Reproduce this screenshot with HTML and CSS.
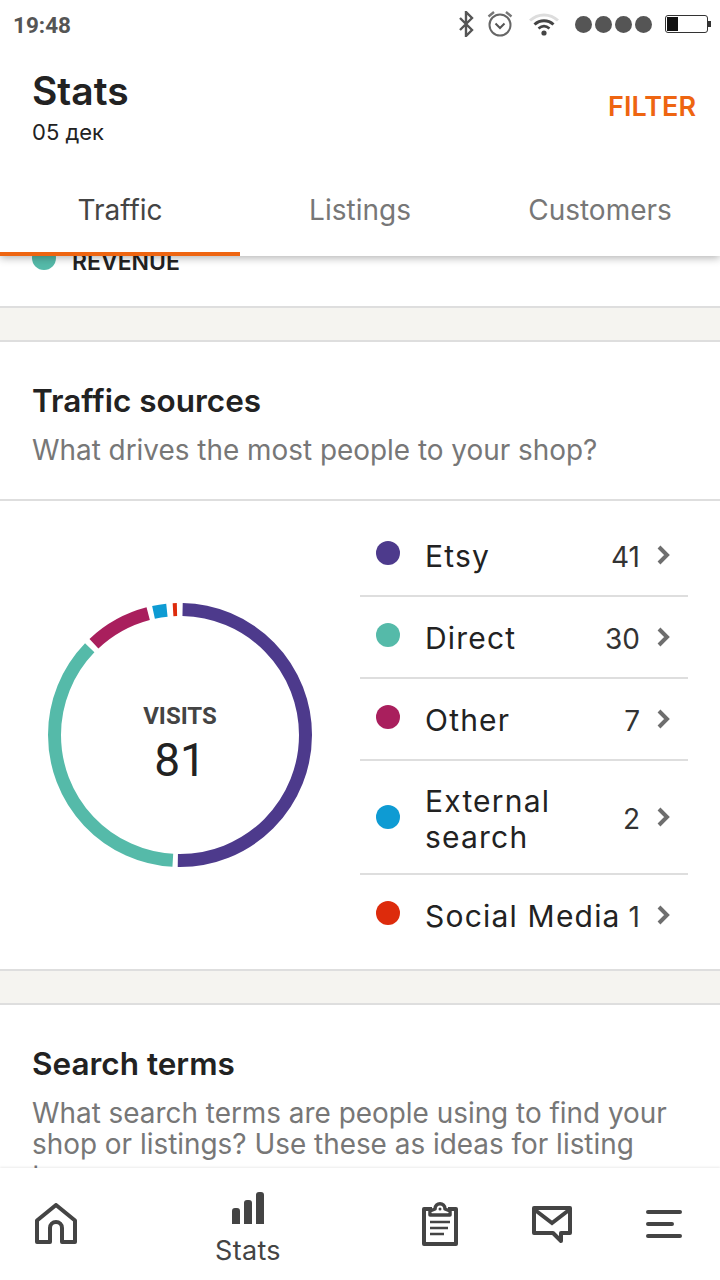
FILE: index.html
```html
<!DOCTYPE html>
<html lang="en">
<head>
<meta charset="utf-8">
<title>Stats</title>
<link rel="stylesheet" href="styles.css">
</head>
<body>
<div class="phone">
  <header class="top">
    <div class="status">
      <span class="clock">19:48</span>
      <div class="status-icons">
        <svg class="ic-bt" width="16" height="26" viewBox="0 0 16 26"><path d="M2 7l12 12-6 6V1l6 6L2 19" fill="none" stroke="#555" stroke-width="2.4"/></svg>
        <svg class="ic-alarm" width="26" height="28" viewBox="0 0 26 28"><circle cx="13" cy="15" r="10.5" fill="none" stroke="#666" stroke-width="2"/><path d="M8.5 13.5l4.5 4.5 4.5-4.5" fill="none" stroke="#555" stroke-width="2"/><path d="M1.5 6.5L7 2M24.500 6.500L19 2" stroke="#777" stroke-width="2.400" fill="none"/></svg>
        <svg class="ic-wifi" width="30" height="24" viewBox="0 0 30 24"><path d="M1 8.500C9 1 21 1 29 8.500" fill="none" stroke="#ddd" stroke-width="3"/><path d="M5.500 12.500C11 7.500 19 7.500 24.500 12.500" fill="none" stroke="#444" stroke-width="3"/><path d="M9.500 16.500C13 13.500 17 13.500 20.500 16.500" fill="none" stroke="#444" stroke-width="2.600"/><circle cx="15" cy="21" r="2.600" fill="#444"/></svg>
        <div class="signal"><i></i><i></i><i></i><i></i></div>
        <div class="battery"><span class="battery-fill"></span></div>
      </div>
    </div>
    <div class="title-row">
      <div>
        <h1>Stats</h1>
        <p class="date">05 дек</p>
      </div>
      <span class="filter">FILTER</span>
    </div>
    <nav class="tabs">
      <span class="tab active">Traffic</span>
      <span class="tab">Listings</span>
      <span class="tab">Customers</span>
    </nav>
  </header>

  <main class="scroll">
    <section class="revenue">
      <i class="dot teal"></i><span>REVENUE</span>
    </section>
    <div class="band"></div>
    <section class="head">
      <h2>Traffic sources</h2>
      <p>What drives the most people to your shop?</p>
    </section>
    <section class="sources">
      <div class="donut">
        <svg width="264" height="264" viewBox="0 0 264 264">
          <g fill="none" stroke-width="13" transform="rotate(-90 132 132)">
            <circle cx="132" cy="132" r="125.500" pathLength="360" stroke="#4d3a8c" stroke-dasharray="179.800 180.200" stroke-dashoffset="-1.200"/>
            <circle cx="132" cy="132" r="125.500" pathLength="360" stroke="#55baa9" stroke-dasharray="130.700 229.300" stroke-dashoffset="-183.300"/>
            <circle cx="132" cy="132" r="125.500" pathLength="360" stroke="#a91f5d" stroke-dasharray="28.600 331.400" stroke-dashoffset="-316.700"/>
            <circle cx="132" cy="132" r="125.500" pathLength="360" stroke="#0e9bd3" stroke-dasharray="6.200 353.800" stroke-dashoffset="-347.800"/>
            <circle cx="132" cy="132" r="125.500" pathLength="360" stroke="#dd2b0c" stroke-dasharray="1.800 358.200" stroke-dashoffset="-356.800"/>
          </g>
        </svg>
        <div class="donut-label">
          <span class="visits">VISITS</span>
          <span class="total">81</span>
        </div>
      </div>
      <ul class="legend">
        <li class="row"><i class="dot purple"></i><span class="name">Etsy</span><span class="count">41</span><svg class="chev" width="14" height="22" viewBox="0 0 14 22"><path d="M3 3l8 8-8 8" fill="none" stroke="#6e6e6e" stroke-width="4"/></svg></li>
        <li class="row"><i class="dot teal"></i><span class="name">Direct</span><span class="count">30</span><svg class="chev" width="14" height="22" viewBox="0 0 14 22"><path d="M3 3l8 8-8 8" fill="none" stroke="#6e6e6e" stroke-width="4"/></svg></li>
        <li class="row"><i class="dot berry"></i><span class="name">Other</span><span class="count">7</span><svg class="chev" width="14" height="22" viewBox="0 0 14 22"><path d="M3 3l8 8-8 8" fill="none" stroke="#6e6e6e" stroke-width="4"/></svg></li>
        <li class="row tall"><i class="dot blue"></i><span class="name">External search</span><span class="count">2</span><svg class="chev" width="14" height="22" viewBox="0 0 14 22"><path d="M3 3l8 8-8 8" fill="none" stroke="#6e6e6e" stroke-width="4"/></svg></li>
        <li class="row"><i class="dot red"></i><span class="name">Social Media</span><span class="count">1</span><svg class="chev" width="14" height="22" viewBox="0 0 14 22"><path d="M3 3l8 8-8 8" fill="none" stroke="#6e6e6e" stroke-width="4"/></svg></li>
      </ul>
    </section>
    <div class="band"></div>
    <section class="head terms">
      <h2>Search terms</h2>
      <p>What search terms are people using to find your shop or listings? Use these as ideas for listing tags.</p>
    </section>
  </main>

  <nav class="bottom">
    <span class="nav-item">
      <svg width="42" height="42" viewBox="0 0 42 42"><path d="M2 39V17.500L21 2l19 15.500V39H27V25a6 6 0 0 0-12 0v14z" fill="none" stroke="#444" stroke-width="4" stroke-linejoin="round"/></svg>
    </span>
    <span class="nav-item stats-item">
      <svg width="34" height="32" viewBox="0 0 34 32"><path d="M1 32V19a3 3 0 0 1 3-3h2a3 3 0 0 1 3 3v13zM13 32V11a3 3 0 0 1 3-3h2a3 3 0 0 1 3 3v21zM25 32V3a3 3 0 0 1 3-3h2a3 3 0 0 1 3 3v29z" fill="#444"/></svg>
      <span class="nav-label">Stats</span>
    </span>
    <span class="nav-item">
      <svg width="36" height="44" viewBox="0 0 36 44"><path d="M10 7H2v35h32V7h-8" fill="none" stroke="#444" stroke-width="4" stroke-linejoin="round"/><path d="M8 13V9l5-2c0-7 10-7 10 0l5 2v4z" fill="#fff" stroke="#444" stroke-width="3.500" stroke-linejoin="round"/><circle cx="18" cy="7" r="1.500" fill="#444"/><path d="M8 20h20M8 26h18M8 32h14" stroke="#444" stroke-width="2.400"/></svg>
    </span>
    <span class="nav-item">
      <svg width="40" height="37" viewBox="0 0 40 37"><path d="M2 2h36v25H29v8l-8-8H2z" fill="none" stroke="#444" stroke-width="4" stroke-linejoin="round"/><path d="M3 4l17 13L37 4" fill="none" stroke="#444" stroke-width="4"/></svg>
    </span>
    <span class="nav-item">
      <svg width="36" height="28" viewBox="0 0 36 28"><path d="M2 2h32M2 14h24M2 26h32" stroke="#444" stroke-width="4" stroke-linecap="round"/></svg>
    </span>
  </nav>
</div>
</body>
</html>
```
FILE: styles.css
```css
* { box-sizing: border-box; }
html, body { margin: 0; padding: 0; background: #fff; }
body { font-family: Inter, "Liberation Sans", sans-serif; color: #222; }
h1, h2, p, ul { margin: 0; padding: 0; }
ul { list-style: none; }
i { display: block; font-style: normal; }

.phone {
  width: 720px;
  height: 1280px;
  display: flex;
  flex-direction: column;
  overflow: hidden;
  background: #fff;
}

.top {
  height: 256px;
  flex: none;
  position: relative;
  z-index: 2;
  background: #fff;
  box-shadow: 0 2px 8px rgba(0, 0, 0, .3);
}
.status {
  height: 48px;
  display: flex;
  align-items: center;
  justify-content: space-between;
  padding: 0 12px 0 13px;
}
.clock { font: 700 22.500px Roboto, sans-serif; color: #555; padding-top: 2px; }
.status-icons { display: flex; align-items: center; }
.ic-alarm { margin-left: 13px; }
.ic-wifi { margin-left: 16px; }
.signal { display: flex; gap: 3px; margin-left: 16px; }
.signal i { width: 17px; height: 17px; border-radius: 50%; background: #555; }
.battery {
  width: 43px;
  height: 18px;
  margin-left: 13px;
  position: relative;
  border: 1px solid #333;
  border-radius: 3px;
  padding: 1px;
}
.battery::after {
  content: "";
  position: absolute;
  right: -4px;
  top: 5px;
  width: 3px;
  height: 6px;
  background: #333;
}
.battery-fill { display: block; width: 11px; height: 100%; background: #111; }

.title-row {
  height: 106px;
  padding: 20px 24px 0 32px;
  display: flex;
  justify-content: space-between;
}
h1 { font-size: 39px; font-weight: 600; line-height: 46px; color: #222; }
.date { font-size: 22px; line-height: 30px; margin-top: 3px; color: #222; }
.filter { font-size: 27px; font-weight: 600; color: #ee6511; line-height: 36px; margin-top: 21px; }

.tabs { display: flex; height: 102px; }
.tab {
  flex: 1;
  text-align: center;
  font-size: 28px;
  line-height: 36px;
  padding-top: 38px;
  color: #777;
}
.tab.active { color: #444; border-bottom: 4px solid #ee6511; }

.scroll { flex: 1; min-height: 0; overflow: hidden; }

.revenue {
  height: 52px;
  margin-top: -2px;
  display: flex;
  align-items: flex-start;
  padding-left: 32px;
  font-size: 23px;
  font-weight: 600;
  color: #222;
}
.revenue .dot { margin: -8px 0 0; }
.revenue span { margin: -6px 0 0 16px; line-height: 28px; }
.dot { width: 24px; height: 24px; border-radius: 50%; flex: none; margin-bottom: 4px; }
.teal { background: #55baa9; }
.purple { background: #4d3a8c; }
.berry { background: #a91f5d; }
.blue { background: #0e9bd3; }
.red { background: #dd2b0c; }

.band {
  height: 36px;
  background: #f5f4f0;
  border-top: 2px solid #dedede;
  border-bottom: 2px solid #dedede;
}
.head { padding: 39px 32px 0; height: 159px; border-bottom: 2px solid #dedede; }
h2 { font-size: 31.500px; font-weight: 600; line-height: 40px; color: #222; }
.head p { font-size: 27.900px; line-height: 31px; color: #777; margin-top: 14px; }
.terms { height: auto; border-bottom: 0; }

.sources { height: 468px; display: flex; }
.donut {
  width: 360px;
  flex: none;
  padding: 102px 0 0 48px;
  position: relative;
}
.donut svg { display: block; }
.donut-label {
  position: absolute;
  left: 48px;
  top: 102px;
  width: 264px;
  height: 264px;
  display: flex;
  flex-direction: column;
  align-items: center;
  padding-top: 98px;
}
.visits { font: 700 24px/30px Roboto, sans-serif; color: #444; }
.total { font: 400 46px/54px Roboto, sans-serif; color: #222; margin-top: 2px; }

.legend { width: 328px; padding-top: 14px; }
.row {
  height: 82px;
  display: flex;
  align-items: center;
  padding: 0 18px 0 16px;
  border-bottom: 2px solid #dedede;
  font-size: 30px;
  color: #222;
}
.row.tall { height: 114px; }
.row.tall .dot { margin-bottom: 0; }
.row.tall .name { padding-top: 4px; }
.row:last-child { border-bottom-color: transparent; }
.name { flex: 1; margin-left: 25px; padding-top: 2px; line-height: 36px; letter-spacing: 1.200px; }
.count { font-size: 28px; color: #333; padding-top: 4px; }
.chev { margin-left: 16px; }

.bottom {
  height: 112px;
  flex: none;
  position: relative;
  z-index: 2;
  background: #fff;
  box-shadow: 0 -1px 2px rgba(0, 0, 0, .08);
  display: grid;
  grid-template-columns: 112px 272px 112px 112px 112px;
  align-items: center;
}
.nav-item { display: flex; flex-direction: column; align-items: center; justify-content: center; }
.stats-item { align-self: start; padding-top: 24px; }
.nav-label { font-size: 27px; line-height: 32px; color: #444; margin-top: 11px; letter-spacing: .3px; }
```
